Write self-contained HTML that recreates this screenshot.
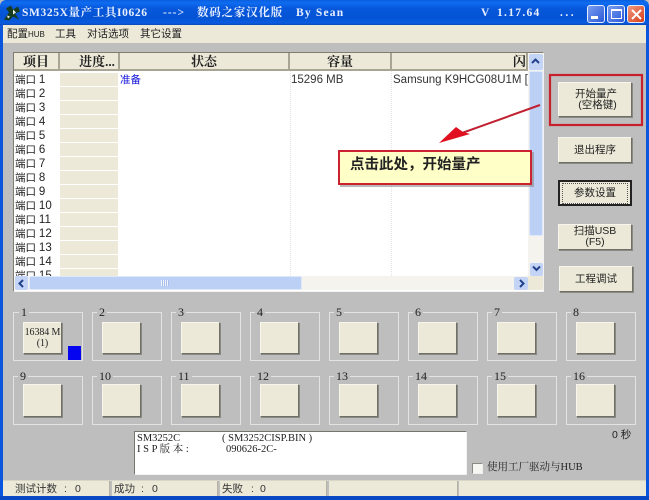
<!DOCTYPE html>
<html><head><meta charset="utf-8">
<style>
*{box-sizing:border-box}
html,body{margin:0;padding:0;width:649px;height:500px;overflow:hidden;background:#bebebe}
body{position:relative;font-family:"Liberation Sans","Noto Sans CJK SC",sans-serif;font-size:12px;color:#111}
.a,.a>*{position:absolute}
.t{position:absolute;white-space:nowrap;line-height:14px}
#tb{left:0;top:0;width:649px;height:25px;background:linear-gradient(#0a5fe0 0,#0f6cf0 3px,#0758dc 8px,#0453d4 18px,#0a5be0 23px,#0a48b8 25px);border-radius:6px 6px 0 0}
.tt{position:absolute;font-family:"Liberation Serif","Noto Serif CJK SC",serif;font-weight:bold;color:#e8f0ff;font-size:11.5px;top:6px;white-space:pre;line-height:14px}
.wb{top:5px;height:18px;border:1px solid #e6eefc;border-radius:3px;background:linear-gradient(135deg,#7a9ef0,#2a5ad8)}
.b{position:absolute;background:#ece9d8;border:1px solid;border-color:#f8f6ec #6f6f68 #6f6f68 #f8f6ec;box-shadow:1px 1px 0 #8a8a84;text-align:center;font-size:10.5px;color:#222;line-height:11px;display:flex;align-items:center;justify-content:center;white-space:pre}
.g{position:absolute;width:70px;border:1px solid #e3e3e3}
.gl{position:absolute;background:#bebebe;font-family:"Liberation Serif",serif;font-size:12px;line-height:12px;padding:0 2px;color:#222}
.h{position:absolute;top:53px;height:18px;background:#ece9d8;border-right:2px solid #a8a595;border-bottom:2px solid #a8a595;font-family:"Liberation Serif","Noto Serif CJK SC",serif;font-weight:bold;font-size:13px;line-height:17px;text-align:center;color:#222;white-space:nowrap;overflow:hidden}
.p{position:absolute;left:60px;width:58px;height:13px;background:#ece9d8}
.pt{position:absolute;left:15px;font-size:10.5px;line-height:14px;color:#222;white-space:nowrap}
.pt b{font-weight:normal;font-size:11.5px}
.s{position:absolute;top:481px;height:15px;background:#ece9d8;border-right:1px solid #b5b2a3}
.st{position:absolute;top:482px;font-size:10.5px;line-height:14px;color:#333;white-space:pre}
.mn{top:27px;font-size:10.5px;color:#222}
.inf{font-family:'Liberation Serif','Noto Serif CJK SC',serif;font-size:10.5px;line-height:11px;color:#222;white-space:pre}
</style></head><body>
<div class="a" id="tb"></div>
<svg style="position:absolute;left:4px;top:4px" width="16" height="17" viewBox="0 0 16 16"><path d="M0 15L5 8 2 4 7 1 9 5 14 2 16 7 11 9 15 15 9 12 5 16z" fill="#173c20"/><path d="M9 5l3 3-3 2zM3 11l3 1-2 2z" fill="#e8efe8"/></svg>
<div class="tt" style="left:22px;letter-spacing:.62px">SM325X量产工具I0626</div>
<div class="tt" style="left:163px;letter-spacing:1px">---&gt;</div>
<div class="tt" style="left:197px;letter-spacing:.8px">数码之家汉化版</div>
<div class="tt" style="left:296px;letter-spacing:1.2px">By Sean</div>
<div class="tt" style="left:481px">V</div>
<div class="tt" style="left:497px;letter-spacing:1.300px">1.17.64</div>
<div class="tt" style="left:560px;letter-spacing:2.500px">...</div>
<div class="a" style="left:0;top:0">
 <div class="wb" style="left:587px;width:18px"><div style="position:absolute;left:3px;top:10px;width:7px;height:3px;background:#fff"></div></div>
 <div class="wb" style="left:607px;width:18px"><div style="position:absolute;left:3px;top:3px;width:11px;height:10px;border:1px solid #fff;border-top:2px solid #fff"></div></div>
 <div class="wb" style="left:627px;width:18px;background:linear-gradient(135deg,#f09a80,#d83c18)">
  <svg style="position:absolute;left:2px;top:2px" width="13" height="13"><path d="M2 2L11 11M11 2L2 11" stroke="#fff" stroke-width="2"/></svg></div>
</div>
<!-- window side borders -->
<div style="position:absolute;left:0;top:25px;width:3px;height:475px;background:#0a56dc"></div>
<div style="position:absolute;left:646px;top:25px;width:3px;height:475px;background:#0a56dc"></div>
<div style="position:absolute;left:0;top:496px;width:649px;height:4px;background:#0a48c4"></div>
<!-- menu -->
<div style="position:absolute;left:3px;top:25px;width:643px;height:18px;background:#ece9d8"></div>
<div class="t mn" style="left:7px">配置<span style="font-size:8px">HUB</span></div>
<div class="t mn" style="left:55px">工具</div>
<div class="t mn" style="left:87px">对话选项</div>
<div class="t mn" style="left:140px">其它设置</div>
<!-- list -->
<div style="position:absolute;left:13px;top:52px;width:531px;height:240px;background:#fff;border:1px solid;border-color:#7f7d72 #f2f2f2 #f2f2f2 #7f7d72"></div>
<div class="h" style="left:14px;width:46px">项目</div>
<div class="h" style="left:60px;width:60px;padding-left:16px">进度...</div>
<div class="h" style="left:120px;width:170px">状态</div>
<div class="h" style="left:290px;width:102px">容量</div>
<div class="h" style="left:392px;width:136px;text-align:right">闪</div>
<div style="position:absolute;left:290px;top:71px;height:205px;border-left:1px dotted #e4e4e4"></div>
<div style="position:absolute;left:391px;top:71px;height:205px;border-left:1px dotted #e4e4e4"></div>
<div class="p" style="top:73px"></div><div class="p" style="top:87px"></div><div class="p" style="top:101px"></div><div class="p" style="top:115px"></div><div class="p" style="top:129px"></div><div class="p" style="top:143px"></div><div class="p" style="top:157px"></div><div class="p" style="top:171px"></div><div class="p" style="top:185px"></div><div class="p" style="top:199px"></div><div class="p" style="top:213px"></div><div class="p" style="top:227px"></div><div class="p" style="top:241px"></div><div class="p" style="top:255px"></div><div class="p" style="top:269px;height:7px"></div>
<div class="pt" style="top:73px">端口 <b>1</b></div><div class="pt" style="top:87px">端口 <b>2</b></div><div class="pt" style="top:101px">端口 <b>3</b></div><div class="pt" style="top:115px">端口 <b>4</b></div><div class="pt" style="top:129px">端口 <b>5</b></div><div class="pt" style="top:143px">端口 <b>6</b></div><div class="pt" style="top:157px">端口 <b>7</b></div><div class="pt" style="top:171px">端口 <b>8</b></div><div class="pt" style="top:185px">端口 <b>9</b></div><div class="pt" style="top:199px">端口 <b>10</b></div><div class="pt" style="top:213px">端口 <b>11</b></div><div class="pt" style="top:227px">端口 <b>12</b></div><div class="pt" style="top:241px">端口 <b>13</b></div><div class="pt" style="top:255px">端口 <b>14</b></div>
<div class="pt" style="top:269px;height:7px;overflow:hidden">端口 <b>15</b></div>
<div class="t" style="left:120px;top:73px;font-size:10.5px;color:#1010d8">准备</div>
<div class="t" style="left:291px;top:73px;font-size:11.5px;color:#333">15296 MB</div>
<div class="t" style="left:393px;top:73px;font-size:11.5px;color:#333">Samsung K9HCG08U1M [</div>
<!-- vscroll -->
<div style="position:absolute;left:528px;top:53px;width:15px;height:223px;background:#f4f3ee"></div>
<div style="position:absolute;left:529px;top:54px;width:14px;height:16px;background:#c4d4f6;border-radius:2px"></div>
<svg style="position:absolute;left:531px;top:58px" width="9" height="7"><path d="M1 5L4.500 1.500 8 5" fill="none" stroke="#24428c" stroke-width="2"/></svg>
<div style="position:absolute;left:529px;top:71px;width:14px;height:165px;background:#bccff5;border:1px solid #dfe8fb;border-radius:2px"></div>
<div style="position:absolute;left:530px;top:263px;width:13px;height:13px;background:#c4d4f6;border-radius:2px"></div>
<svg style="position:absolute;left:532px;top:265px" width="9" height="7"><path d="M1 1.500L4.500 5 8 1.500" fill="none" stroke="#24428c" stroke-width="2"/></svg>
<!-- hscroll -->
<div style="position:absolute;left:14px;top:276px;width:514px;height:14px;background:#f4f3ee"></div>
<div style="position:absolute;left:15px;top:276px;width:13px;height:14px;background:#c4d4f6;border-radius:2px"></div>
<svg style="position:absolute;left:18px;top:279px" width="7" height="9"><path d="M5 1L1.500 4.500 5 8" fill="none" stroke="#24428c" stroke-width="2"/></svg>
<div style="position:absolute;left:29px;top:276px;width:273px;height:14px;background:#bccff5;border:1px solid #dfe8fb;border-radius:2px"></div>
<div style="position:absolute;left:161px;top:280px;width:8px;height:6px;background:repeating-linear-gradient(90deg,#eef3fd 0 1px,#a9bfeb 1px 2px)"></div>
<div style="position:absolute;left:514px;top:277px;width:14px;height:13px;background:#c4d4f6;border-radius:2px"></div>
<svg style="position:absolute;left:518px;top:279px" width="7" height="9"><path d="M2 1L5.500 4.500 2 8" fill="none" stroke="#24428c" stroke-width="2"/></svg>
<div style="position:absolute;left:528px;top:276px;width:15px;height:14px;background:#ece9d8"></div>
<!-- side buttons -->
<div class="b" style="left:558px;top:82px;width:74px;height:35px;padding-left:2px;padding-top:1px">开始量产
 (空格键)</div>
<div class="b" style="left:558px;top:137px;width:74px;height:26px">退出程序</div>
<div class="b" style="left:558px;top:180px;width:74px;height:26px;border:2px solid #222;box-shadow:none"><span style="border:1px dotted #555;padding:4px 0;width:66px">参数设置</span></div>
<div class="b" style="left:558px;top:224px;width:74px;height:26px">扫描USB
(F5)</div>
<div class="b" style="left:559px;top:266px;width:74px;height:26px">工程调试</div>
<!-- groups -->
<div class="g" style="left:13px;top:312px;height:49px"></div><div class="gl" style="left:19px;top:306px">1</div><div class="b" style="left:23px;top:322px;width:39px;height:32px;font-family:'Liberation Serif',serif;font-size:10px;line-height:11px;letter-spacing:-.1px">16384 M
(1)</div><div style="position:absolute;left:68px;top:346px;width:13px;height:14px;background:#0404f0"></div>
<div class="g" style="left:92px;top:312px;height:49px"></div><div class="gl" style="left:97px;top:306px">2</div><div class="b" style="left:102px;top:322px;width:39px;height:32px"></div>
<div class="g" style="left:171px;top:312px;height:49px"></div><div class="gl" style="left:176px;top:306px">3</div><div class="b" style="left:181px;top:322px;width:39px;height:32px"></div>
<div class="g" style="left:250px;top:312px;height:49px"></div><div class="gl" style="left:255px;top:306px">4</div><div class="b" style="left:260px;top:322px;width:39px;height:32px"></div>
<div class="g" style="left:329px;top:312px;height:49px"></div><div class="gl" style="left:334px;top:306px">5</div><div class="b" style="left:339px;top:322px;width:39px;height:32px"></div>
<div class="g" style="left:408px;top:312px;height:49px"></div><div class="gl" style="left:413px;top:306px">6</div><div class="b" style="left:418px;top:322px;width:39px;height:32px"></div>
<div class="g" style="left:487px;top:312px;height:49px"></div><div class="gl" style="left:492px;top:306px">7</div><div class="b" style="left:497px;top:322px;width:39px;height:32px"></div>
<div class="g" style="left:566px;top:312px;height:49px"></div><div class="gl" style="left:571px;top:306px">8</div><div class="b" style="left:576px;top:322px;width:39px;height:32px"></div>
<div class="g" style="left:13px;top:376px;height:49px"></div><div class="gl" style="left:18px;top:370px">9</div><div class="b" style="left:23px;top:384px;width:39px;height:33px"></div>
<div class="g" style="left:92px;top:376px;height:49px"></div><div class="gl" style="left:97px;top:370px">10</div><div class="b" style="left:102px;top:384px;width:39px;height:33px"></div>
<div class="g" style="left:171px;top:376px;height:49px"></div><div class="gl" style="left:176px;top:370px">11</div><div class="b" style="left:181px;top:384px;width:39px;height:33px"></div>
<div class="g" style="left:250px;top:376px;height:49px"></div><div class="gl" style="left:255px;top:370px">12</div><div class="b" style="left:260px;top:384px;width:39px;height:33px"></div>
<div class="g" style="left:329px;top:376px;height:49px"></div><div class="gl" style="left:334px;top:370px">13</div><div class="b" style="left:339px;top:384px;width:39px;height:33px"></div>
<div class="g" style="left:408px;top:376px;height:49px"></div><div class="gl" style="left:413px;top:370px">14</div><div class="b" style="left:418px;top:384px;width:39px;height:33px"></div>
<div class="g" style="left:487px;top:376px;height:49px"></div><div class="gl" style="left:492px;top:370px">15</div><div class="b" style="left:497px;top:384px;width:39px;height:33px"></div>
<div class="g" style="left:566px;top:376px;height:49px"></div><div class="gl" style="left:571px;top:370px">16</div><div class="b" style="left:576px;top:384px;width:39px;height:33px"></div>
<!-- info -->
<div style="position:absolute;left:134px;top:431px;width:333px;height:44px;background:#fff;border:1px solid;border-color:#77756a #f2f2f2 #f2f2f2 #77756a"></div>
<div class="t inf" style="left:137px;top:433px;line-height:11px">SM3252C</div>
<div class="t inf" style="left:222px;top:433px;line-height:11px">( SM3252CISP.BIN )</div>
<div class="t inf" style="left:137px;top:444px;line-height:11px">I S P 版 本 :</div>
<div class="t inf" style="left:226px;top:444px;line-height:11px">090626-2C-</div>
<div class="t" style="left:612px;top:428px;font-size:10.5px;color:#222">0 秒</div>
<div style="position:absolute;left:472px;top:463px;width:11px;height:11px;background:#f6f6f2;border:1px solid;border-color:#8a8a84 #eee #eee #8a8a84"></div>
<div class="t inf" style="left:487px;top:461px;line-height:14px">使用工厂驱动与HUB</div>
<!-- status -->
<div style="position:absolute;left:3px;top:480px;width:643px;height:1px;background:#d8d6c8"></div>
<div class="s" style="left:3px;width:107px"></div>
<div class="s" style="left:112px;width:106px"></div>
<div class="s" style="left:220px;width:107px"></div>
<div class="s" style="left:329px;width:129px"></div>
<div class="s" style="left:459px;width:187px;border-right:0"></div>
<div class="st" style="left:15px">测试计数</div><div class="st" style="left:64px">:</div><div class="st" style="left:75px">0</div>
<div class="st" style="left:114px">成功</div><div class="st" style="left:141px">:</div><div class="st" style="left:152px">0</div>
<div class="st" style="left:222px">失败</div><div class="st" style="left:251px">:</div><div class="st" style="left:260px">0</div>
<!-- annotation -->
<svg style="position:absolute;left:430px;top:70px" width="219" height="100" viewBox="430 70 219 100">
 <rect x="550" y="75" width="92" height="50" fill="none" stroke="#c8202c" stroke-width="2.200"/>
 <path d="M540 105L462 133" stroke="#c02030" stroke-width="2" fill="none"/>
 <path d="M439 143L456 127 463 132 470 134z" fill="#e01020"/>
</svg>
<div style="position:absolute;left:340px;top:152px;width:194px;height:35px;background:#8a8a8a;opacity:.6"></div>
<div style="position:absolute;left:338px;top:150px;width:194px;height:35px;background:#ffffc8;border:2px solid #cc2230"></div>
<div class="t" style="left:350px;top:157px;font-size:14.500px;font-weight:bold;color:#222;line-height:16px">点击此处，开始量产</div>
</body></html>
